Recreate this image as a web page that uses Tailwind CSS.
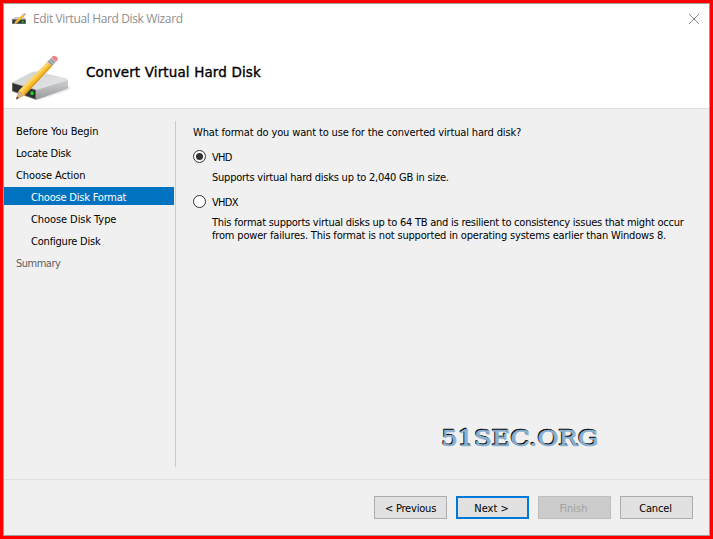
<!DOCTYPE html>
<html lang="en">
<head>
  <meta charset="UTF-8" />
  <title>Edit Virtual Hard Disk Wizard</title>
  <script src="https://cdn.jsdelivr.net/npm/@tailwindcss/browser@4"></script>
</head>
<body class="bg-[red] p-[3px] w-[713px] h-[539px] overflow-hidden font-['DejaVu_Sans_Condensed','DejaVu_Sans',sans-serif] [font-stretch:condensed] text-[11px] leading-[13px] text-black">

  <div class="flex flex-col w-[707px] h-[533px] border border-[#a0a0a0] bg-[#f0f0f0]">

    <!-- Header -->
    <header class="h-[105px] shrink-0 bg-white border-b border-[#dfdfdf]">
      <div class="flex items-center h-[30px] pl-2 pr-[10px]">
        <svg class="w-[14px] h-[12px] shrink-0" viewBox="0 0 14 12">
          <path d="M0 6L3 4H11.500L14 6Z" fill="#c9cacc" />
          <path d="M0 6H14V11H0Z" fill="#8d8f92" />
          <path d="M.5 6.800H13.300V10.500H.5Z" fill="#36393b" />
          <rect x="10" y="8" width="1.600" height="1.600" fill="#18e018" />
          <path d="M2.500 11L3.400 8.300L10.600 1.400L12.300 3L5.200 10Z" fill="#f3b928" />
          <path d="M2.500 11L3.400 8.300L5.200 10Z" fill="#deb184" />
          <path d="M10.200 1.800L11.400 .7L13.100 2.300L11.900 3.400Z" fill="#b9babc" />
          <path d="M11.400 .7L12.400 0L14 1.400L13.100 2.300Z" fill="#ef7f88" />
        </svg>
        <h1 class="ml-[7px] font-['Open_Sans',sans-serif] [font-stretch:normal] text-[12px] leading-4 text-[#8f8f8f] whitespace-nowrap tracking-[-0.37px]">Edit Virtual Hard Disk Wizard</h1>
        <svg class="ml-auto w-[10px] h-[10px]" viewBox="0 0 10 10" stroke="#8a8a8a" stroke-width="1" fill="none">
          <path d="M0 0L10 10M10 0L0 10" />
        </svg>
      </div>
      <div class="flex pl-2 pt-[21px]">
        <svg class="w-[60px] h-[48px] shrink-0" viewBox="0 0 60 48">
          <defs>
            <linearGradient id="top" x1="0" y1="0" x2="1" y2="1">
              <stop offset="0" stop-color="#d0d1d3" />
              <stop offset="1" stop-color="#e6e7e9" />
            </linearGradient>
            <linearGradient id="side" x1="0" y1="0" x2="0" y2="1">
              <stop offset="0" stop-color="#d0d1d3" />
              <stop offset="1" stop-color="#97989b" />
            </linearGradient>
          </defs>
          <g transform="translate(0 1.500)">
            <path d="M24 44.500L56 34L58.500 31.500L55 28Z" fill="#ececec" />
            <path d="M0 26L19 16Q22 14.500 26 15L53 21.500Q56 22.300 56 24L24 33.500Z" fill="url(#top)" />
            <path d="M24 33.500L56 23.500V31Q56 32 54 32.800L24 43.500Z" fill="url(#side)" />
            <path d="M0 26L24 33V43.500L0 35Z" fill="#909193" />
            <path d="M.5 26.700L23.500 33.700V42.500L.5 34.200Z" fill="#303234" />
            <rect x="18.500" y="35" width="3" height="3.500" rx="1" fill="#18e018" />
            <path d="M4 43L7 34L36 5L40.500 9L12.500 39Z" fill="#f6bf33" />
            <path d="M7 34L36 5L38 6.600L9 36Z" fill="#fcd669" />
            <path d="M11.200 38L39.500 8L40.500 9L12.500 39Z" fill="#dc9a1c" />
            <path d="M4 43L7 34L12.500 39Z" fill="#deb184" />
            <path d="M4 43L5 40L7 41.500Z" fill="#4b4038" />
            <path d="M35 5.500L39.500 1L44.200 5L40 9.500Z" fill="#b9babc" />
            <path d="M36.200 4.500L41 8.500M38.100 2.600L42.800 6.600" stroke="#7f8185" stroke-width="1" fill="none" />
            <path d="M39.500 1L41 -.500Q42.300 -1.300 44.500 .300Q46.500 2 45.500 3.700L44.200 5Z" fill="#ef7f88" />
          </g>
        </svg>
        <h2 class="ml-[14px] pt-[9px] font-['DejaVu_Sans',sans-serif] [font-stretch:normal] text-[13.5px] leading-4 whitespace-nowrap tracking-[0.13px] [-webkit-text-stroke:0.35px_black]">Convert Virtual Hard Disk</h2>
      </div>
    </header>

    <!-- Steps and page content -->
    <main class="flex h-[371px] shrink-0 border-b border-[#dfdfdf]">
      <nav class="flex flex-col gap-1 w-[172px] h-[358px] pt-3 pr-px shrink-0 whitespace-nowrap tracking-[-0.2px]">
        <div class="h-[18px] pl-3 leading-[21px] tracking-[-0.08px]">Before You Begin</div>
        <div class="h-[18px] pl-3 leading-[21px]">Locate Disk</div>
        <div class="h-[18px] pl-3 leading-[21px] tracking-[-0.1px]">Choose Action</div>
        <div class="h-[18px] pl-[27px] leading-[21px] bg-[#0072c0] text-white mr-px">Choose Disk Format</div>
        <div class="h-[18px] pl-[27px] leading-[21px] tracking-[-0.08px]">Choose Disk Type</div>
        <div class="h-[18px] pl-[27px] leading-[21px]">Configure Disk</div>
        <div class="h-[18px] pl-3 leading-[21px] text-[#606060] tracking-[-0.5px]">Summary</div>
      </nav>
      <div class="w-px h-[346px] mt-3 -ml-px bg-[#cacaca]"></div>

      <section class="flex-1 pl-[17px] pt-[17px] whitespace-nowrap">
        <p class="h-[13px] tracking-[-0.15px]">What format do you want to use for the converted virtual hard disk?</p>
        <label class="flex items-center h-[13px] mt-[11px]">
          <svg class="w-[13px] h-[13px]" viewBox="0 0 13 13">
            <circle cx="6.500" cy="6.500" r="6" fill="#fff" stroke="#333" />
            <circle cx="6.500" cy="6.500" r="3.500" fill="#333" />
          </svg>
          <span class="ml-[6px] pt-px tracking-[-0.7px]">VHD</span>
        </label>
        <p class="pl-[19px] mt-2 tracking-[-0.23px]">Supports virtual hard disks up to 2,040 GB in size.</p>
        <label class="flex items-center h-[13px] mt-[11px]">
          <svg class="w-[13px] h-[13px]" viewBox="0 0 13 13">
            <circle cx="6.500" cy="6.500" r="6" fill="#fff" stroke="#333" />
          </svg>
          <span class="ml-[6px] pt-px tracking-[-0.7px]">VHDX</span>
        </label>
        <p class="pl-[19px] mt-2 tracking-[-0.235px]">This format supports virtual disks up to 64 TB and is resilient to consistency issues that might occur</p>
        <p class="pl-[19px] tracking-[-0.175px]">from power failures. This format is not supported in operating systems earlier than Windows 8.</p>

        <svg class="ml-[245px] mt-[181px] w-[166px] h-[28px] [font-stretch:normal]" viewBox="0 0 166 28" font-family="DejaVu Serif, serif" font-size="23">
          <text x="2.500" y="21.500" textLength="157" lengthAdjust="spacingAndGlyphs" fill="#000" stroke="#000" stroke-width=".5">51SEC.ORG</text>
          <text x="3.500" y="22.500" textLength="157" lengthAdjust="spacingAndGlyphs" fill="#8ab0d0" stroke="#8ab0d0" stroke-width=".7">51SEC.ORG</text>
        </svg>
      </section>
    </main>

    <!-- Buttons -->
    <footer class="flex justify-end gap-[9px] pt-4 pr-4">
      <button class="w-[73px] h-[23px] pt-px border border-[#adadad] bg-[#e1e1e1] tracking-[-0.2px]">&lt; Previous</button>
      <button class="w-[73px] h-[23px] pt-px pr-0.5 border-2 border-[#0078d7] bg-[#e1e1e1]">Next &gt;</button>
      <button class="w-[73px] h-[23px] pt-px pr-0.5 border border-[#bfbfbf] bg-[#cccccc] text-[#a0a0a0]" disabled>Finish</button>
      <button class="w-[73px] h-[23px] pt-px pr-0.5 border border-[#adadad] bg-[#e1e1e1] tracking-[-0.15px]">Cancel</button>
    </footer>
  </div>

</body>
</html>
